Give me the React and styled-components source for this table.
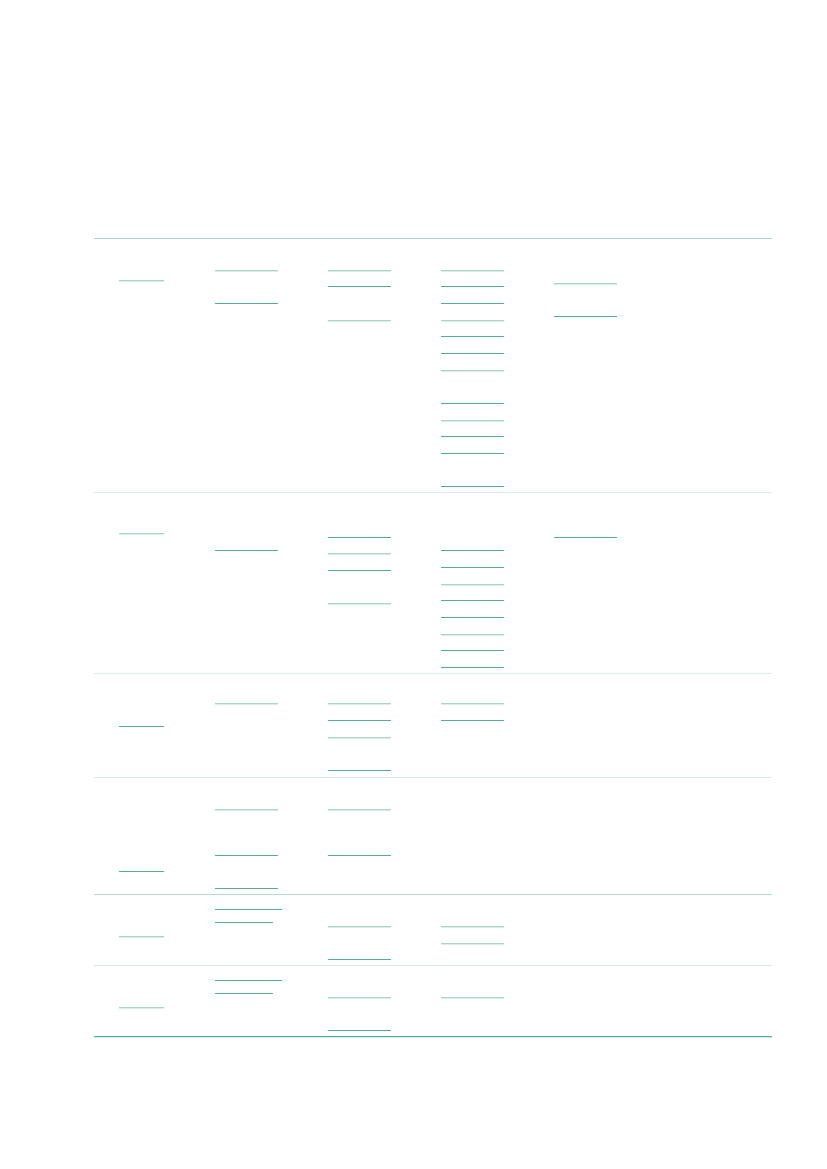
import React from "react";
import styled, { createGlobalStyle } from "styled-components";

const GlobalStyle = createGlobalStyle`
  html, body {
    margin: 0;
    padding: 0;
    background: #ffffff;
    font-family: "Liberation Sans", Arial, sans-serif;
  }
`;

const Page = styled.div`
  width: 827px;
  min-height: 1169px;
  box-sizing: border-box;
  padding: 238px 0 0 94px;
  background: #ffffff;
`;

const Table = styled.div`
  width: 678px;
  display: flex;
  flex-direction: column;
  border-bottom: 1px solid #56b29a;
  box-shadow: 0 1px 0 #cfe9e0;
`;

const Row = styled.div`
  display: grid;
  grid-template-columns: repeat(6, 113px);
  height: ${(p) => p.$h}px;
  box-sizing: border-box;
  border-top: 1px solid ${(p) => p.$line};
`;

const Cell = styled.div`
  display: flex;
  flex-direction: column;
  align-items: flex-start;
  padding-left: ${(p) => (p.$first ? 25 : 8)}px;
  padding-top: ${(p) => p.$pad}px;
`;

// underline of a link whose text is not shown
const Bar = styled.span`
  display: block;
  width: ${(p) => p.$w}px;
  height: 1px;
  margin-top: ${(p) => p.$gap}px;
  background: ${(p) => (p.$kind === "D" ? "#50b096" : "#a8d7c8")};
  box-shadow: ${(p) => (p.$kind === "D" ? "none" : "0 1px 0 #d9eee7")};
`;

const rows = [
  {
    top: 238,
    h: 254,
    line: "#a9d8c9",
    cells: [
      [[280, "L"]],
      [[270, "L"], [303, "D"]],
      [[270, "L"], [286, "D"], [320, "L"]],
      [
        [270, "L"], [286, "D"], [303, "D"], [320, "L"], [336, "D"], [353, "D"],
        [370, "L"], [403, "D"], [420, "L"], [436, "D"], [453, "D"], [486, "D"],
      ],
      [[283, "L"], [316, "D"]],
      [],
    ],
  },
  {
    top: 492,
    h: 181,
    line: "#dcebe6",
    cells: [
      [[533, "L"]],
      [[550, "D"]],
      [[537, "D"], [553, "L"], [570, "D"], [603, "L"]],
      [
        [550, "D"], [567, "D"], [584, "L"], [600, "D"],
        [617, "D"], [634, "L"], [650, "D"], [667, "D"],
      ],
      [[537, "D"]],
      [],
    ],
  },
  {
    top: 673,
    h: 104,
    line: "#dfeae7",
    cells: [
      [[726, "D"]],
      [[703, "L"]],
      [[703, "L"], [720, "D"], [737, "L"], [770, "D"]],
      [[703, "L"], [720, "D"]],
      [],
      [],
    ],
  },
  {
    top: 777,
    h: 117,
    line: "#dde8e5",
    cells: [
      [[871, "D"]],
      [[809, "L"], [855, "D"], [888, "D"]],
      [[809, "L"], [855, "D"]],
      [],
      [],
      [],
    ],
  },
  {
    top: 894,
    h: 71,
    line: "#b6dbcf",
    cells: [
      [[936, "L"]],
      [[909, "D", 67], [922, "D", 58]],
      [[926, "L"], [959, "D"]],
      [[926, "L"], [943, "L"]],
      [],
      [],
    ],
  },
  {
    top: 965,
    h: 71,
    line: "#d9e6e2",
    cells: [
      [[1007, "L"]],
      [[980, "D", 67], [993, "D", 58]],
      [[997, "L"], [1030, "D"]],
      [[997, "L"]],
      [],
      [],
    ],
  },
];

const App = () => {
  return (
    <>
      <GlobalStyle />
      <Page>
        <Table>
          {rows.map((row, ri) => (
            <Row key={ri} $h={row.h} $line={row.line}>
              {row.cells.map((bars, ci) => (
                <Cell
                  key={ci}
                  $first={ci === 0}
                  $pad={bars.length ? bars[0][0] - row.top - 1 : 0}
                >
                  {bars.map(([y, kind, w], bi) => (
                    <Bar
                      key={bi}
                      $kind={kind}
                      $w={w || (ci === 0 ? 45 : 63)}
                      $gap={bi === 0 ? 0 : y - bars[bi - 1][0] - 1}
                    />
                  ))}
                </Cell>
              ))}
            </Row>
          ))}
        </Table>
      </Page>
    </>
  );
};

export default App;
